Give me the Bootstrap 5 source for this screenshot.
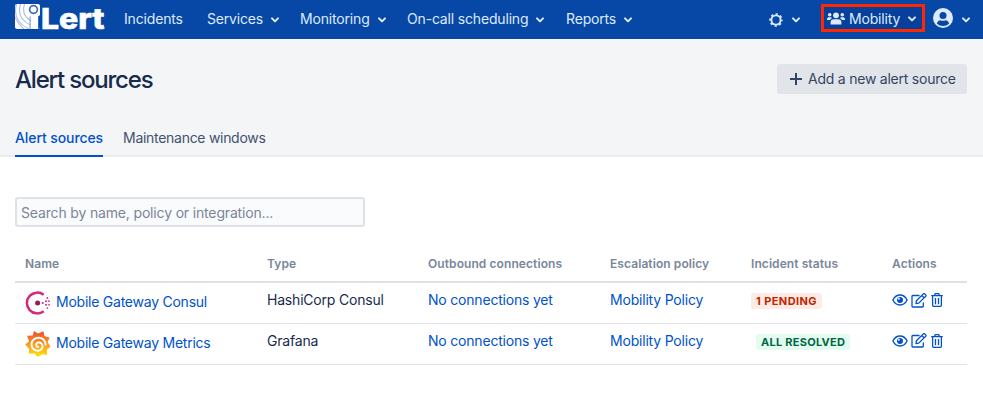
<!DOCTYPE html>
<html lang="en">
<head>
<meta charset="utf-8">
<meta name="viewport" content="width=device-width, initial-scale=1">
<title>Alert sources</title>
<link href="https://cdn.jsdelivr.net/npm/bootstrap@5.3.0/dist/css/bootstrap.min.css" rel="stylesheet">
<style>
body{font-family:Inter,"Liberation Sans",sans-serif;font-size:14px;line-height:20px;color:#172b4d;background:#fff;overflow:hidden}
a{color:#0052cc;text-decoration:none}
svg{display:block;flex:none}
.topbar{height:39px;background:#0747a6;padding:0 12px 0 15px}
.topbar a{color:#deebff}
.brand-logo{width:109px}
.menu-item{line-height:20px;letter-spacing:-.17px;white-space:nowrap;margin-top:-1px}
.w-a{width:83px}.w-b{width:93px}.w-c{width:107px}.w-d{width:159px}
.chev{margin-left:8px;margin-top:1px}
.menu-item .chev{margin-left:7px}
.team{width:104px;height:28px;border:3px solid #ff2600;background:#07409a;padding-left:3px;margin-left:20px;margin-top:-3px}
.team .menu-item{margin-top:2px}
.team .chev{margin-left:7px;margin-top:2px}
.page-head{height:118px;background:#f4f5f7;border-bottom:2px solid #ebecf0;padding:25px 16px 0 15px}
.page-head h1{font-size:24px;line-height:32px;font-weight:500;letter-spacing:-1.2px}
.btn-add{height:30px;width:190px;background:#e1e4e9;color:#344563;border:0;border-radius:3px;font-size:14px;line-height:20px;padding:0 0 0 13px}
.add-text{letter-spacing:-.23px;margin-left:2px;white-space:nowrap}
.tabs{gap:20px;margin-bottom:-2px}
.tab-link{height:38px;padding-top:9px;color:#42526e;letter-spacing:-.29px}
.tab-link.on{color:#0052cc;font-weight:500;letter-spacing:-.09px;border-bottom:2px solid #0052cc}
.main-area{padding:0 16px 0 15px}
.search{width:350px;height:30px;border:2px solid #dfe1e6;border-radius:3px;background:#fafbfc;padding:1px 4px;font-size:14px;line-height:20px;letter-spacing:-.16px;margin-top:40px}
.search::placeholder{color:#7a869a;opacity:1}
.sources{table-layout:fixed;width:952px;margin-top:17px;color:#172b4d}
.sources th{height:38px;padding:3px 10px 0;font-size:12px;line-height:16px;font-weight:600;letter-spacing:.08px;color:#7a869a;border-bottom:2px solid #dfe1e6;vertical-align:middle}
.sources td{height:41px;padding:7px 10px 0;border-bottom:1px solid #dfe1e6;vertical-align:top;white-space:nowrap;line-height:20px;letter-spacing:-.2px}
.src{gap:5px}
.src-name{letter-spacing:-.24px;margin-top:-2px}
.acts{gap:3px;align-items:center;height:20px}
.acts a:last-child{margin-left:1px}
.lozenge{display:inline-block;height:16px;line-height:16px;border-radius:3px;padding:0 5px;font-size:11px;font-weight:700}
.pending{background:#ffebe6;color:#bf2600;letter-spacing:.42px}
.resolved{background:#e3fcef;color:#006644;margin-left:5px;letter-spacing:.26px}
</style>
</head>
<body>
<svg width="0" height="0" class="position-absolute">
  <defs>
    <symbol id="chev" viewBox="0 0 10 8"><path d="M2 2.400 5 5.400 8 2.400" fill="none" stroke="currentColor" stroke-width="2" stroke-linecap="round" stroke-linejoin="round"/></symbol>
    <symbol id="eye" viewBox="0 0 16 12"><path d="M.9 6C4.200-.6 11.800-.6 15.100 6 11.800 12.600 4.200 12.600.9 6Z" fill="none" stroke="currentColor" stroke-width="1.400"/><circle cx="8" cy="6" r="3" fill="currentColor"/><circle cx="6.800" cy="4.800" r="1" fill="#fff"/></symbol>
    <symbol id="edit" viewBox="0 0 16 15"><path d="M8.500 2.500H1.700Q1 2.500 1 3.200V13.200Q1 14 1.700 14H11.500Q12.300 14 12.300 13.200V9.500M5 10.500 5.400 7.700 12.300.9Q13 .4 13.700.9L14.700 1.900Q15.200 2.600 14.700 3.300L7.800 10.100ZM10.800 2.500 13.200 4.900" fill="none" stroke="currentColor" stroke-width="1.300" stroke-linejoin="round"/></symbol>
    <symbol id="trash" viewBox="0 0 12 14"><path d="M.2 2.700H11.800M3.400 2.500 4.300.7H7.700L8.600 2.500M1.600 2.900V12.300Q1.600 13.300 2.600 13.300H9.400Q10.400 13.300 10.400 12.300V2.900M4.500 5V11.200M7.500 5V11.200" fill="none" stroke="currentColor" stroke-width="1.300"/></symbol>
  </defs>
</svg>

<nav class="topbar d-flex align-items-center">
  <a href="#" class="brand-logo" aria-label="iLert">
    <svg width="92" height="39" viewBox="0 -4 92 39">
      <clipPath id="mark"><rect width="25" height="25" rx="2"/></clipPath>
      <g clip-path="url(#mark)">
        <rect width="25" height="25" fill="#fff"/>
        <g fill="none" stroke="#a9bde0" stroke-width="1.100">
          <path d="M9.500 0Q6 11 16 17M5.500 0Q1 14 15.500 21M1.500 0Q-3 17 14 25M0 13Q3 20 9 25"/>
        </g>
        <path d="M25 11V25H23.200V12.500Z" fill="#0747a6"/>
        <circle cx="18.500" cy="5.500" r="3.900" fill="#fff" stroke="#3f6db9" stroke-width="1.700"/>
        <path d="M15.100 12.500V25" stroke="#7897cd" stroke-width="1"/>
      </g>
      <text x="26" y="24.500" textLength="63.500" lengthAdjust="spacingAndGlyphs" font-family="Inter,sans-serif" font-weight="800" font-size="28" fill="#fff" stroke="#fff" stroke-width=".6">Lert</text>
    </svg>
  </a>
  <a href="#" class="menu-item w-a">Incidents</a>
  <a href="#" class="menu-item w-b d-flex align-items-center">Services<svg class="chev" width="10" height="8"><use href="#chev"/></svg></a>
  <a href="#" class="menu-item w-c d-flex align-items-center">Monitoring<svg class="chev" width="10" height="8"><use href="#chev"/></svg></a>
  <a href="#" class="menu-item w-d d-flex align-items-center">On-call scheduling<svg class="chev" width="10" height="8"><use href="#chev"/></svg></a>
  <a href="#" class="menu-item d-flex align-items-center">Reports<svg class="chev" width="10" height="8"><use href="#chev"/></svg></a>
  <a href="#" class="ms-auto d-flex align-items-center" aria-label="Settings">
    <svg width="14" height="14" viewBox="0 0 14 14" fill="none" stroke="currentColor"><circle cx="7" cy="7" r="4.600" stroke-width="1.900"/><circle cx="7" cy="7" r="6" stroke-width="1.600" stroke-dasharray="2.300 2.412" stroke-dashoffset="1.150"/></svg>
    <svg class="chev" width="10" height="8"><use href="#chev"/></svg>
  </a>
  <a href="#" class="team d-flex align-items-center">
    <svg width="18" height="13" viewBox="0 0 18 13" fill="currentColor"><circle cx="9" cy="3.300" r="2.900"/><circle cx="2.700" cy="2.700" r="1.800"/><circle cx="15.300" cy="2.700" r="1.800"/><path d="M3.600 12.500V10.500Q3.600 7.300 6.800 7.300H11.200Q14.400 7.300 14.400 10.500V12.500ZM0 8V7Q0 5.200 1.800 5.200H3.600Q4.500 5.200 5.100 5.900 3.500 6.600 3 8ZM18 8V7Q18 5.200 16.200 5.200H14.400Q13.500 5.200 12.900 5.900 14.500 6.600 15 8Z"/></svg>
    <span class="menu-item ms-1">Mobility</span><svg class="chev" width="10" height="8"><use href="#chev"/></svg>
  </a>
  <a href="#" class="d-flex align-items-center ms-2" aria-label="Account">
    <svg width="20" height="20" viewBox="0 0 20 20" class="mb-1"><circle cx="10" cy="10" r="10" fill="#deebff"/><circle cx="10" cy="7.500" r="3.500" fill="#0747a6"/><path d="M3.800 15.400Q5 12.300 7.300 12.300 10 13.300 12.700 12.300 15 12.300 16.200 15.400 13.700 18 10 18T3.800 15.400Z" fill="#0747a6"/></svg>
    <svg class="chev ms-2" width="10" height="8"><use href="#chev"/></svg>
  </a>
</nav>

<header class="page-head d-flex flex-column justify-content-between">
  <div class="d-flex justify-content-between align-items-start">
    <h1 class="m-0">Alert sources</h1>
    <button class="btn btn-add d-flex align-items-center"><svg width="12" height="12" class="me-1" viewBox="0 0 12 12"><path d="M6 0V12M0 6H12" stroke="currentColor" stroke-width="2"/></svg><span class="add-text">Add a new alert source</span></button>
  </div>
  <div class="d-flex tabs">
    <a href="#" class="tab-link on">Alert sources</a>
    <a href="#" class="tab-link">Maintenance windows</a>
  </div>
</header>

<main class="main-area">
  <input class="search d-block" placeholder="Search by name, policy or integration..." aria-label="Search">
  <table class="sources">
    <colgroup><col style="width:242px"><col style="width:161px"><col style="width:182px"><col style="width:141px"><col style="width:141px"><col style="width:85px"></colgroup>
    <thead><tr><th>Name</th><th>Type</th><th>Outbound connections</th><th>Escalation policy</th><th>Incident status</th><th>Actions</th></tr></thead>
    <tbody>
      <tr>
        <td><a href="#" class="d-flex align-items-center src">
          <svg width="26" height="26" viewBox="0 0 26 26"><path d="M18.700 21.200A10.400 10.400 0 1 1 18.700 4.800" fill="none" stroke="#d0297d" stroke-width="2.500"/><circle cx="12.600" cy="13" r="2.500" fill="#961d59"/><g fill="#d62783"><circle cx="17.700" cy="13" r="1.100"/><circle cx="21" cy="11.200" r="1"/><circle cx="21" cy="14.800" r="1"/><circle cx="24" cy="11.200" r=".9"/><circle cx="24" cy="14.800" r=".9"/><circle cx="22.400" cy="7.900" r=".9"/><circle cx="22.400" cy="18.100" r=".9"/></g></svg>
          <span class="src-name">Mobile Gateway Consul</span></a></td>
        <td>HashiCorp Consul</td><td><a href="#">No connections yet</a></td><td><a href="#">Mobility Policy</a></td>
        <td><span class="lozenge pending">1 PENDING</span></td>
        <td><div class="d-flex acts"><a href="#" aria-label="View"><svg width="16" height="12"><use href="#eye"/></svg></a><a href="#" aria-label="Edit"><svg width="16" height="15"><use href="#edit"/></svg></a><a href="#" aria-label="Delete"><svg width="12" height="14"><use href="#trash"/></svg></a></div></td>
      </tr>
      <tr>
        <td><a href="#" class="d-flex align-items-center src">
          <svg width="26" height="26" viewBox="0 0 26 26"><defs><linearGradient id="flame" x1="0" y1="1" x2="0" y2="0"><stop offset="0" stop-color="#ffe600"/><stop offset=".35" stop-color="#fbb020"/><stop offset="1" stop-color="#ee4e2b"/></linearGradient></defs>
          <path d="M9 0 13 2.500 18.500.2 19.500 4.900 24.700 6.700 22.500 11 25.500 15.700 21.900 18.700 22 24 17 23.300 12.700 26 9.500 22.500 4 22.800 4 18 .2 13.500 4.100 10.200 2 4.800 7.700 4.400Z" fill="url(#flame)"/>
          <path d="M20.700 13.500C20 9 16.800 6.700 13.200 6.800 8.900 7 6.300 10.200 6.500 13.700 6.800 17.500 9.700 20 13 19.800 16.500 19.500 18.300 16.500 17.300 13.800 16.200 11.200 13 10.600 11.600 12.400 10.500 14 11.400 16 13.200 15.800" fill="none" stroke="#fff" stroke-width="1.900" stroke-linecap="round"/></svg>
          <span class="src-name">Mobile Gateway Metrics</span></a></td>
        <td>Grafana</td><td><a href="#">No connections yet</a></td><td><a href="#">Mobility Policy</a></td>
        <td><span class="lozenge resolved">ALL RESOLVED</span></td>
        <td><div class="d-flex acts"><a href="#" aria-label="View"><svg width="16" height="12"><use href="#eye"/></svg></a><a href="#" aria-label="Edit"><svg width="16" height="15"><use href="#edit"/></svg></a><a href="#" aria-label="Delete"><svg width="12" height="14"><use href="#trash"/></svg></a></div></td>
      </tr>
    </tbody>
  </table>
</main>
<script src="https://cdn.jsdelivr.net/npm/bootstrap@5.3.0/dist/js/bootstrap.bundle.min.js"></script>
</body>
</html>
